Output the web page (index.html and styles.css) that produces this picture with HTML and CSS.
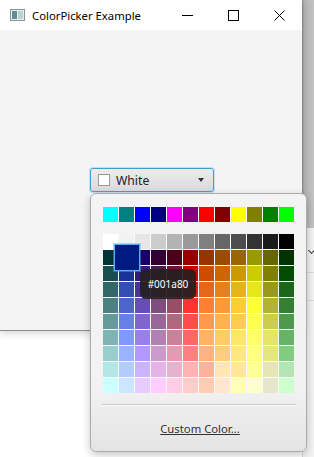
FILE: index.html
```html
<!DOCTYPE html>
<html lang="en">
<head>
    <meta charset="UTF-8">
    <meta name="viewport" content="width=device-width, initial-scale=1.0">
    <title>ColorPicker Example</title>
    <link rel="stylesheet" href="styles.css">
</head>
<body>
    <div class="desktop">
        <div class="window">
            <div class="titlebar">
                <svg class="app-icon" width="15" height="12" viewBox="0 0 15 12">
                    <rect x="0.5" y="0.5" width="14" height="11" fill="#e8eef0" stroke="#8a9498"/>
                    <rect x="2" y="2" width="5" height="8" fill="#5f8f95"/>
                    <rect x="8" y="2" width="5" height="8" fill="#b9d2d6"/>
                </svg>
                <span class="title">ColorPicker Example</span>
                <div class="controls">
                    <span class="ctl"><svg width="11" height="11" viewBox="0 0 11 11"><path d="M0 5.5H11" stroke="#000" stroke-width="1"/></svg></span>
                    <span class="ctl"><svg width="11" height="11" viewBox="0 0 11 11"><rect x="0.5" y="0.5" width="10" height="10" fill="none" stroke="#000"/></svg></span>
                    <span class="ctl"><svg width="11" height="11" viewBox="0 0 11 11"><path d="M0.5 0.5L10.5 10.5M10.5 0.5L0.5 10.5" stroke="#000" stroke-width="1"/></svg></span>
                </div>
            </div>
            <div class="content">
                <div class="picker">
                    <div class="picker-button">
                        <span class="picker-swatch"></span>
                        <span class="picker-label">White</span>
                        <span class="picker-arrow"></span>
                    </div>
                    <div class="popup">
                        <div class="custom-row" id="customRow"></div>
                        <div class="palette" id="palette">
                            <div class="tooltip">#001a80</div>
                        </div>
                        <div class="separator"></div>
                        <a class="custom-link" href="#">Custom Color...</a>
                    </div>
                </div>
            </div>
        </div>
        <div class="behind">
            <div class="behind-top"></div>
            <div class="behind-bottom">
                <div class="behind-row"><span class="chevron"></span></div>
                <div class="behind-row"></div>
            </div>
        </div>
    </div>
    <script>
        // JavaFX default palette, 12 columns x 10 rows
        const RAW = [
            255,255,255, 242,242,242, 230,230,230, 204,204,204, 179,179,179, 153,153,153,
            128,128,128, 102,102,102, 77,77,77, 51,51,51, 26,26,26, 0,0,0,
            0,51,51, 0,26,128, 26,0,104, 51,0,51, 77,0,26, 153,0,0,
            153,51,0, 153,77,0, 153,102,0, 153,153,0, 102,102,0, 0,51,0,
            26,77,77, 26,51,153, 51,26,128, 77,26,77, 102,26,51, 204,0,0,
            204,77,0, 204,102,0, 204,153,0, 204,204,0, 128,128,0, 0,77,0,
            51,102,102, 51,77,179, 77,51,153, 102,51,102, 128,51,77, 230,26,26,
            230,102,26, 230,128,26, 230,179,26, 230,230,26, 153,153,26, 26,102,26,
            77,128,128, 77,102,204, 102,77,179, 128,77,128, 153,77,102, 255,51,51,
            255,128,51, 255,153,51, 255,204,51, 255,255,51, 179,179,51, 51,128,51,
            102,153,153, 102,128,230, 128,102,204, 153,102,153, 179,102,128, 255,77,77,
            255,153,77, 255,179,77, 255,204,77, 255,255,77, 204,204,77, 77,153,77,
            128,179,179, 128,153,255, 153,128,230, 179,128,179, 204,128,153, 255,102,102,
            255,179,102, 255,204,102, 255,230,102, 255,255,102, 230,230,102, 102,179,102,
            153,204,204, 153,179,255, 179,153,255, 204,153,204, 230,153,179, 255,128,128,
            255,179,128, 255,204,128, 255,230,128, 255,255,128, 230,230,128, 128,204,128,
            179,230,230, 179,204,255, 204,179,255, 230,179,230, 230,179,204, 255,179,179,
            255,179,153, 255,230,179, 255,230,153, 255,255,153, 230,230,179, 179,230,179,
            204,255,255, 204,230,255, 230,204,255, 255,204,255, 255,204,230, 255,204,204,
            255,204,179, 255,230,204, 255,255,179, 255,255,204, 230,230,204, 204,255,204
        ];
        const CUSTOM = ['#00ffff', '#008080', '#0000ff', '#000080', '#ff00ff', '#800080',
                        '#ff0000', '#800000', '#ffff00', '#808000', '#008000', '#00ff00'];

        function addSwatch(parent, color) {
            const sq = document.createElement('div');
            sq.className = 'swatch';
            sq.style.background = color;
            parent.appendChild(sq);
            return sq;
        }

        const customRow = document.getElementById('customRow');
        CUSTOM.forEach(c => addSwatch(customRow, c));

        const palette = document.getElementById('palette');
        for (let i = 0; i < RAW.length; i += 3) {
            const sq = addSwatch(palette, `rgb(${RAW[i]}, ${RAW[i + 1]}, ${RAW[i + 2]})`);
            if (i / 3 === 13) sq.classList.add('hover');
        }
    </script>
</body>
</html>
```

FILE: styles.css
```css
body {
    margin: 0;
    padding: 0;
    background: #ffffff;
    font-family: 'Segoe UI', 'Noto Sans', Arial, sans-serif;
    color: #000;
}
.desktop {
    display: flex;
    align-items: flex-start;
    width: 314px;
    height: 457px;
    overflow: hidden;
    background: #ffffff;
}
.window {
    width: 302px;
    height: 330px;
    flex-shrink: 0;
    display: flex;
    flex-direction: column;
    background: #f4f4f4;
    box-shadow: 0 1px 0 #8c8c8c, 0 3px 8px rgba(0, 0, 0, 0.18);
    position: relative;
    z-index: 2;
}
.titlebar {
    height: 30px;
    background: #ffffff;
    display: flex;
    align-items: center;
    padding-left: 10px;
}
.app-icon {
    margin-right: 7px;
    flex-shrink: 0;
}
.title {
    flex: 1;
    font-size: 11.3px;
    color: #000;
    white-space: nowrap;
}
.controls {
    display: flex;
    height: 30px;
}
.ctl {
    width: 46px;
    display: flex;
    align-items: center;
    justify-content: center;
}
.content {
    flex: 1;
    padding: 138px 0 0 90px;
}
.picker {
    position: relative;
    width: 124px;
}
.picker-button {
    height: 24px;
    box-sizing: border-box;
    display: flex;
    align-items: center;
    padding: 0 7px;
    border: 1px solid #3fa0cf;
    border-radius: 3px;
    background: linear-gradient(#ececec, #dadada);
    box-shadow: 0 0 0 1px rgba(63, 160, 207, 0.25);
}
.picker-swatch {
    width: 12px;
    height: 12px;
    box-sizing: border-box;
    background: #fff;
    border: 1px solid #9a9a9a;
    margin-right: 6px;
}
.picker-label {
    flex: 1;
    font-size: 12.2px;
    color: #222;
}
.picker-arrow {
    width: 0;
    height: 0;
    border-left: 3.5px solid transparent;
    border-right: 3.5px solid transparent;
    border-top: 4px solid #333;
    margin-right: 2px;
}
.popup {
    position: absolute;
    top: 25px;
    left: 0;
    width: 217px;
    height: 259px;
    box-sizing: border-box;
    padding: 13px 0 0 12px;
    border: 1px solid #ababab;
    border-radius: 6px;
    background: linear-gradient(#f4f4f4, #f2f2f2 75%, #e4e4e4);
    box-shadow: 0 3px 8px rgba(0, 0, 0, 0.22);
    z-index: 5;
}
.custom-row {
    display: grid;
    grid-template-columns: repeat(12, 15px);
    grid-auto-rows: 15px;
    gap: 1px;
    width: 191px;
    background: #fbfbfb;
    margin-bottom: 12px;
}
.palette {
    position: relative;
    display: grid;
    grid-template-columns: repeat(12, 15px);
    grid-auto-rows: 15px;
    gap: 1px;
    width: 191px;
    background: #fbfbfb;
}
.swatch {
    position: relative;
}
.swatch.hover {
    z-index: 2;
}
.swatch.hover::after {
    content: '';
    position: absolute;
    top: -6px;
    left: -5px;
    right: -6px;
    bottom: -6px;
    background: inherit;
    border: 1px solid #58aef0;
    box-shadow: 0 0 0 1px rgba(88, 174, 240, 0.45);
}
.tooltip {
    position: absolute;
    left: 37px;
    top: 35px;
    width: 56px;
    height: 30px;
    box-sizing: border-box;
    border-radius: 6px;
    background: rgba(36, 32, 32, 0.92);
    color: #fff;
    font-size: 10px;
    display: flex;
    align-items: center;
    justify-content: center;
    z-index: 3;
}
.separator {
    width: 194px;
    margin: 11px 0 0 -1px;
    height: 1px;
    background: #c6c6c6;
    border-bottom: 1px solid #fdfdfd;
}
.custom-link {
    display: block;
    width: 194px;
    margin-top: 15px;
    text-align: center;
    font-size: 11.3px;
    line-height: 16px;
    color: #333;
    text-decoration: underline;
}
.behind {
    width: 12px;
    height: 457px;
    flex-shrink: 0;
    display: flex;
    flex-direction: column;
}
.behind-top {
    height: 228px;
    background: linear-gradient(90deg, #8a8a8a, #b4b4b4 2px, #c2c2c2);
}
.behind-bottom {
    flex: 1;
    background: #f2f2f2;
    border-left: 1px solid #d6d6d6;
}
.behind-row {
    height: 44px;
    border-bottom: 1px solid #dcdcdc;
    display: flex;
    align-items: center;
}
.behind-row:last-child {
    height: 27px;
}
.chevron {
    width: 4px;
    height: 4px;
    margin-left: 6px;
    border-right: 1.5px solid #444;
    border-bottom: 1.5px solid #444;
    transform: rotate(45deg);
}
```
